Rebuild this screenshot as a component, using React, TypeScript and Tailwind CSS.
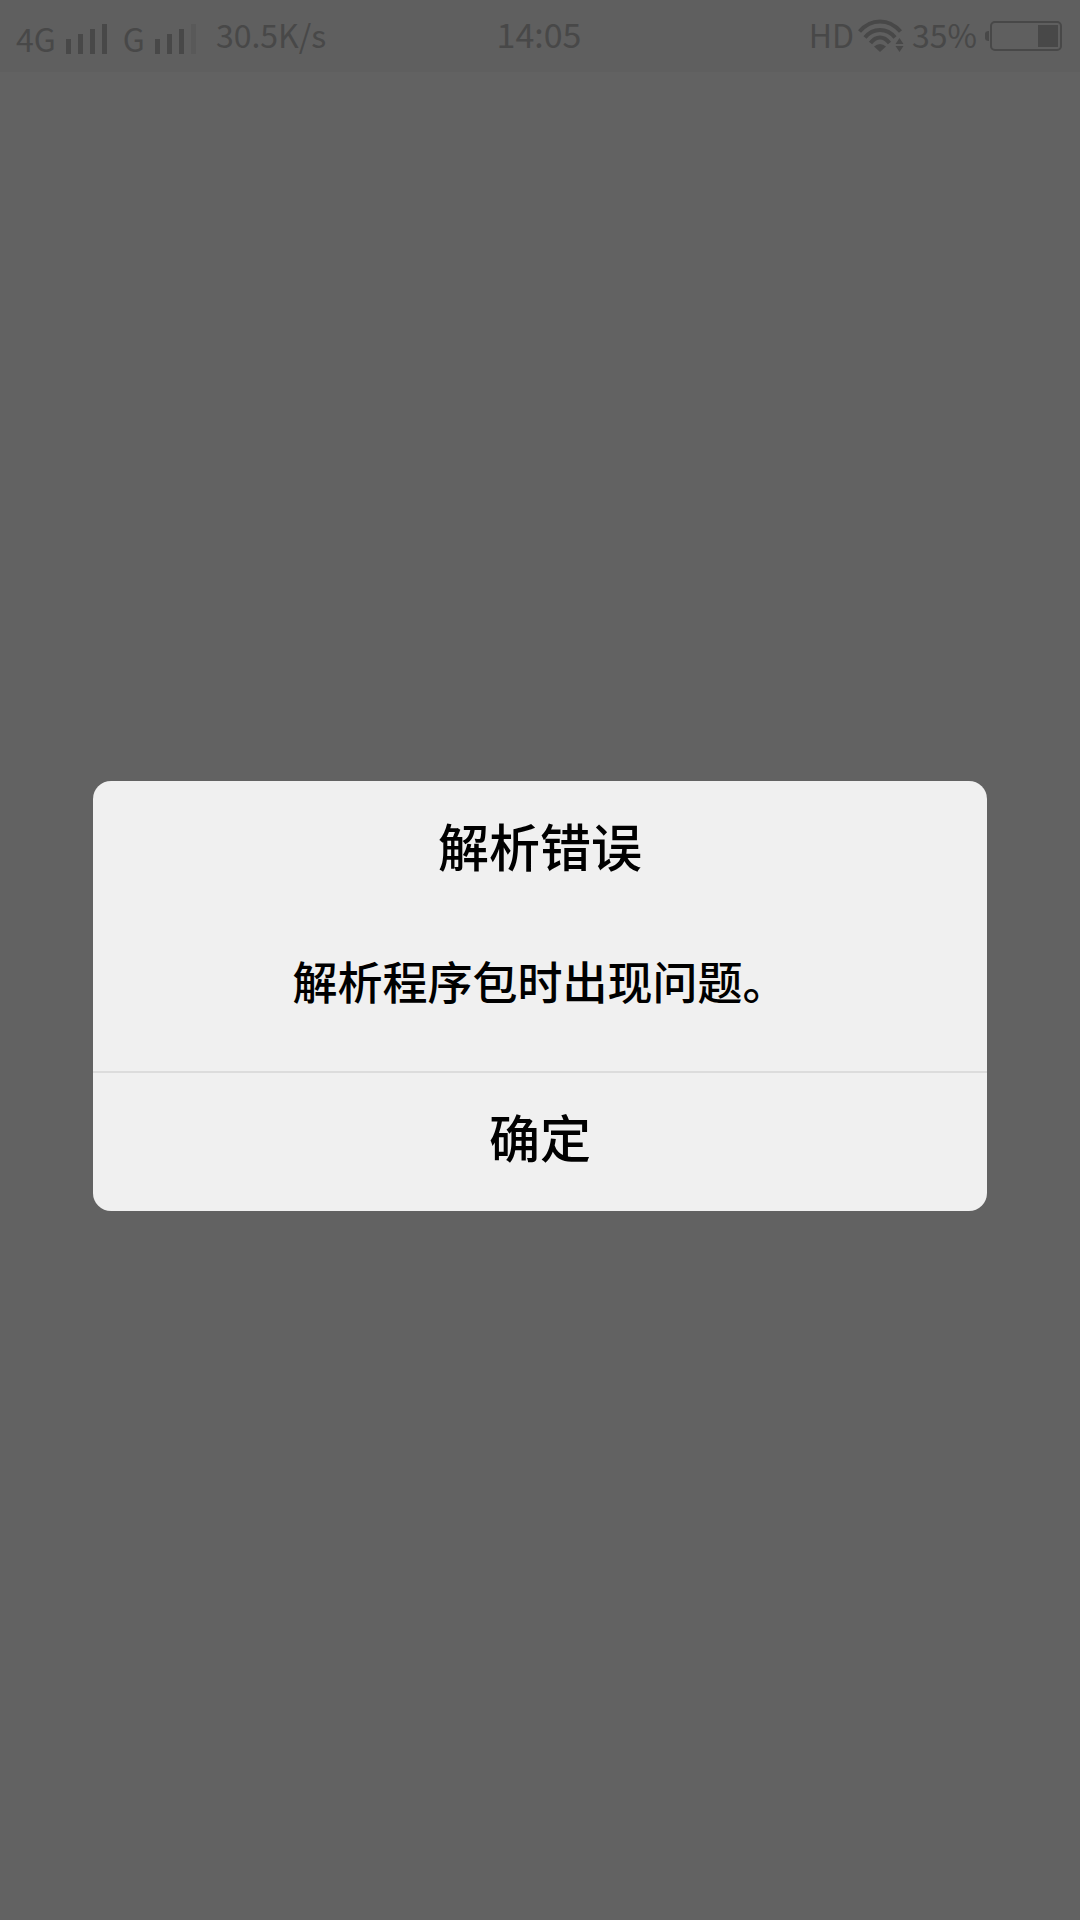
import React, { useState } from 'react';

interface SignalBarsProps {
  active: number;
}

const barHeights = ['h-[15px]', 'h-5', 'h-[25px]', 'h-[30px]'];

function SignalBars({ active }: SignalBarsProps) {
  return (
    <div className="flex items-end gap-[7px]">
      {barHeights.map((height, index) => (
        <span
          key={height}
          className={`w-[5px] ${height} ${index < active ? 'bg-[#484848]' : 'bg-[#595959]'}`}
        />
      ))}
    </div>
  );
}

function WifiIcon() {
  return (
    <svg viewBox="0 0 46 34" className="w-[46px] h-[34px]" fill="none" stroke="currentColor" strokeWidth="4">
      <path d="M1.5 12.5C13 -1 31 -1 42.5 12.5" />
      <path d="M7 18.5C15 8.5 29 8.5 37 18.5" />
      <path d="M12.5 24C18 16.5 26 16.5 31.5 24" />
      <path d="M22 33L16 27.5Q22 22.5 28 27.5Z" fill="currentColor" stroke="none" />
      <path d="M37.5 25L41.5 19L45.5 25Z M37.5 27L41.5 33L45.5 27Z" fill="currentColor" stroke="none" />
    </svg>
  );
}

function BatteryIcon() {
  return (
    <svg viewBox="0 0 77 30" className="w-[77px] h-[30px]">
      <path d="M4 10V20Q0 20 0 17V13Q0 10 4 10Z" fill="currentColor" />
      <rect x="6" y="1" width="70" height="28" rx="4" fill="none" stroke="currentColor" strokeWidth="2" />
      <rect x="53" y="4" width="20" height="22" fill="currentColor" />
    </svg>
  );
}

function StatusBar() {
  return (
    <header className="grid grid-cols-[1fr_auto_1fr] items-center h-[72px] pl-4 pr-[18px] bg-[#5f5f5f] text-[#484848] text-[32px] leading-10">
      <div className="flex items-center">
        <div className="flex items-end pt-1">
          <span className="leading-8 mr-[10px]">4G</span>
          <SignalBars active={4} />
          <span className="leading-8 ml-4 mr-[10px]">G</span>
          <SignalBars active={3} />
        </div>
        <span className="ml-5 pb-1">30.5K/s</span>
      </div>
      <time className="text-[34px] pb-1">14:05</time>
      <div className="flex items-center justify-end">
        <span className="mr-1 pb-1">HD</span>
        <WifiIcon />
        <span className="ml-2 mr-2 pb-1">35%</span>
        <BatteryIcon />
      </div>
    </header>
  );
}

export default function App() {
  const [isOpen, setIsOpen] = useState(true);

  return (
    <div className="min-h-screen flex flex-col bg-[#626262] font-['Noto_Sans_CJK_SC',sans-serif]">
      <StatusBar />
      <main className="flex-1 flex items-center justify-center px-[93px]">
        {isOpen && (
          <div
            role="alertdialog"
            aria-labelledby="dialog-title"
            aria-describedby="dialog-message"
            className="w-full rounded-[18px] overflow-hidden bg-[#f0f0f0] text-black text-center font-medium"
          >
            <h1 id="dialog-title" className="pt-[30px] text-[51px] leading-[68px]">解析错误</h1>
            <p id="dialog-message" className="pt-[72px] pb-[60px] text-[45px] leading-[60px]">解析程序包时出现问题。</p>
            <button
              onClick={() => setIsOpen(false)}
              className="w-full h-[140px] pb-3 border-t-2 border-[#dcdcdc] text-[51px] leading-[68px]"
            >
              确定
            </button>
          </div>
        )}
      </main>
    </div>
  );
}
